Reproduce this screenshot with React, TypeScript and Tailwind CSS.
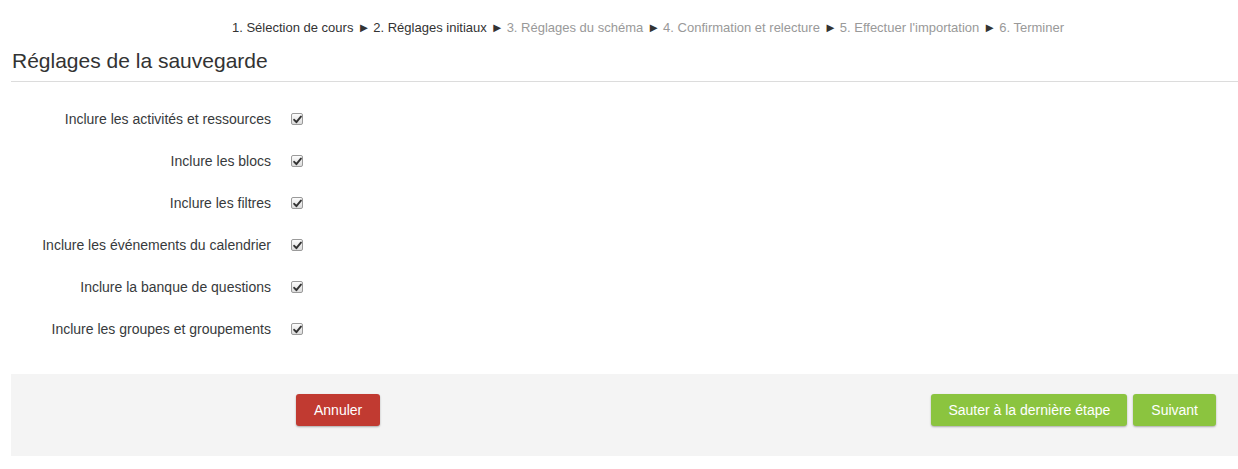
import React from "react";

const rows = [
  "Inclure les activités et ressources",
  "Inclure les blocs",
  "Inclure les filtres",
  "Inclure les événements du calendrier",
  "Inclure la banque de questions",
  "Inclure les groupes et groupements",
];

function Check() {
  return (
    <span className="inline-flex h-[12px] w-[12px] items-center justify-center rounded-[2px] border border-[#9a9a9a] bg-gradient-to-b from-[#fcfcfc] to-[#dcdcdc]">
      <svg width="9" height="9" viewBox="0 0 9 9">
        <path d="M1.2 4.8 L3.4 7.2 L7.9 1.6" fill="none" stroke="#333" strokeWidth="1.9" strokeLinecap="round" strokeLinejoin="round" />
      </svg>
    </span>
  );
}

export default function App() {
  return (
    <div className="h-[469px] w-[1238px] bg-white text-[#373a3c]" style={{ fontFamily: '"Liberation Sans", Arial, sans-serif' }}>
      <div className="flex pl-[232px] pt-[19px] text-[13px] leading-[18px]">
        <span className="text-[#333]">1. Sélection de cours</span>
        <span className="pl-[4px] pr-[3px] text-[#333]">►</span>
        <span className="text-[#333]">2. Réglages initiaux</span>
        <span className="pl-[4px] pr-[3px] text-[#333]">►</span>
        <span className="text-[#999]">3. Réglages du schéma</span>
        <span className="pl-[4px] pr-[3px] text-[#333]">►</span>
        <span className="text-[#999]">4. Confirmation et relecture</span>
        <span className="pl-[4px] pr-[3px] text-[#333]">►</span>
        <span className="text-[#999]">5. Effectuer l'importation</span>
        <span className="pl-[4px] pr-[3px] text-[#333]">►</span>
        <span className="text-[#999]">6. Terminer</span>
      </div>
      <div className="ml-[11px] mt-[11px]">
        <h2 className="border-b border-[#dcdcdc] pb-[7px] pl-px text-[21px] leading-[26px] text-[#333]">Réglages de la sauvegarde</h2>
        <div className="pt-[16px]">
          {rows.map((r) => (
            <div key={r} className="flex h-[42px] items-center">
              <div className="w-[260px] text-right text-[14px] leading-[20px]">{r}</div>
              <div className="ml-[20px] flex">
                <Check />
              </div>
            </div>
          ))}
        </div>
        <div className="mt-[24px] flex h-[82px] items-start bg-[#f4f4f4] pt-[20px]">
          <div className="ml-[285px]">
            <button className="h-[32px] rounded-[3px] bg-[#c13a31] px-[18px] text-[14px] text-white shadow-[0_1px_2px_rgba(0,0,0,0.3)]">Annuler</button>
          </div>
          <div className="ml-auto mr-[22px] flex gap-[6px]">
            <button className="h-[32px] rounded-[3px] bg-[#8bc43f] px-[17px] text-[14px] text-white shadow-[0_1px_2px_rgba(0,0,0,0.3)]">Sauter à la dernière étape</button>
            <button className="h-[32px] rounded-[3px] bg-[#8bc43f] px-[18px] text-[14px] text-white shadow-[0_1px_2px_rgba(0,0,0,0.3)]">Suivant</button>
          </div>
        </div>
      </div>
    </div>
  );
}
